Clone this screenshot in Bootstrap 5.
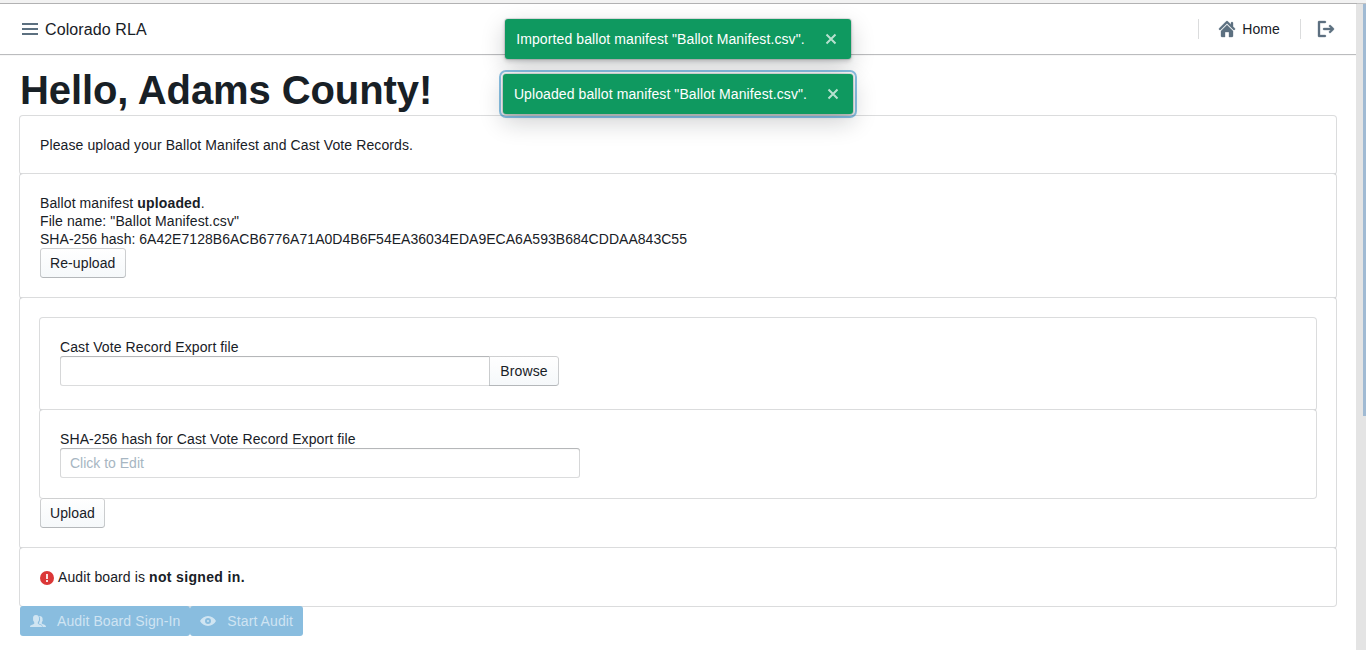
<!DOCTYPE html>
<html lang="en">
<head>
<meta charset="utf-8">
<title>Colorado RLA</title>
<link rel="stylesheet" href="https://cdn.jsdelivr.net/npm/bootstrap@5.3.0/dist/css/bootstrap.min.css">
<style>
  body { font: 14px/18px "Liberation Sans", Arial, sans-serif; color: #182026; background: #fff; letter-spacing: .1px; }
  b { font-weight: 700; letter-spacing: .15px; }
  svg { fill: currentColor; flex: none; }
  .window-edge { height: 4px; background: #f2f2f2; border-bottom: 1px solid #c4c4c4; }
  .top-nav { height: 50px; padding: 0 22px; box-shadow: 0 0 0 1px rgba(16,22,26,.1), 0 1px 1px rgba(16,22,26,.2); }
  .top-nav svg { color: #5c7080; }
  .top-nav .bold-icon { stroke: currentColor; stroke-width: .35; overflow: visible; }
  .app-title { font-size: 16px; line-height: 20px; margin-left: 7px; padding-top: 1px; }
  .nav-split { width: 1px; height: 20px; background: rgba(16,22,26,.15); }
  .nav-home { margin: 0 20px; }
  .nav-home span { margin-left: 7px; }
  .page-body { padding: 16px 20px 0; }
  .greeting { font-size: 40px; line-height: 40px; font-weight: 700; margin: 0 0 6px; letter-spacing: -.1px; }
  .panel { padding: 20px; border-radius: 3px; background: #fff; box-shadow: 0 0 0 1px rgba(16,22,26,.15); position: relative; }
  .panel-file { padding-bottom: 24px; }
  .hash-line { letter-spacing: .033px; }
  .not-signed { letter-spacing: .35px; }
  .btn.action { --bs-btn-border-width: 0; height: 30px; padding: 0 10px; font-size: 14px; line-height: 30px; letter-spacing: .1px; border-radius: 3px; color: #182026;
    background: linear-gradient(#fff, #f5f8fa); background-color: #f5f8fa; box-shadow: inset 0 0 0 1px rgba(16,22,26,.2), inset 0 -1px 0 rgba(16,22,26,.1); position: relative; }
  .btn.action-primary { color: rgba(255,255,255,.6); background: #89bddf; box-shadow: none; opacity: 1; }
  .btn.action-primary svg { margin-right: 11px; }
  .form-control.field { height: 30px; border: 0; border-radius: 3px; padding: 0 10px; font-size: 14px; line-height: 30px; letter-spacing: 0; box-shadow: inset 0 0 0 1px rgba(16,22,26,.15), inset 0 1px 1px rgba(16,22,26,.2); }
  .field::placeholder { color: #a7b6c2 !important; }
  .file-row { width: 499px; }
  .file-row .action { width: 70px; margin-left: -1px; border-radius: 0 3px 3px 0; }
  .hash-field { width: 520px !important; }
  .alert-icon { margin: 3px 4px 0 0; }
  .scroll-track { width: 10px; background: #e4e4e4; }
  .scroll-thumb { width: 3px; height: 412px; background: #a0bad3; }
  .toast-stack { position: absolute; top: 19px; left: 0; width: 1356px; gap: 15px; z-index: 5; }
  .notice { height: 40px; padding: 0 12px 0 11px; border-radius: 3px; background: #0f9960; color: #fff; box-shadow: 0 0 0 1px rgba(16,22,26,.1), 0 2px 4px rgba(16,22,26,.2), 0 8px 24px rgba(16,22,26,.2); }
  .notice svg { margin-left: 18px; opacity: .7; stroke: #fff; stroke-width: 2; }
  .notice-focus { outline: 2px solid rgba(19,124,189,.5); outline-offset: 2px; }
</style>
<script src="https://cdn.jsdelivr.net/npm/bootstrap@5.3.0/dist/js/bootstrap.bundle.min.js"></script>
</head>
<body class="vh-100 overflow-hidden d-flex flex-column">
<div class="window-edge flex-shrink-0"></div>
<div class="d-flex flex-grow-1">
  <div class="flex-grow-1">
    <nav class="top-nav d-flex align-items-center">
      <svg width="16" height="16" viewBox="0 0 16 16"><path d="M0 2h16v2H0zM0 7h16v2H0zM0 12h16v2H0z"/></svg>
      <span class="app-title me-auto">Colorado RLA</span>
      <span class="nav-split"></span>
      <a class="nav-home d-flex align-items-center text-reset text-decoration-none">
        <svg class="bold-icon" width="16" height="16" viewBox="0 0 16 16"><path d="M2 10v5c0 .55.45 1 1 1h3v-5h4v5h3c.55 0 1-.45 1-1v-5L8 4l-6 6zm13.71-2.71L14 5.59V2c0-.55-.45-1-1-1s-1 .45-1 1v1.59L8.71.29C8.53.11 8.28 0 8 0s-.53.11-.71.29l-7 7a1.003 1.003 0 001.42 1.42L8 2.41l6.29 6.29c.18.18.43.3.71.3a1.003 1.003 0 00.71-1.71z"/></svg>
        <span>Home</span>
      </a>
      <span class="nav-split"></span>
      <svg class="bold-icon" style="margin-left:17px" width="16" height="16" viewBox="0 0 16 16"><path d="M7 14H2V2h5c.55 0 1-.45 1-1s-.45-1-1-1H1C.45 0 0 .45 0 1v14c0 .55.45 1 1 1h6c.55 0 1-.45 1-1s-.45-1-1-1zm8.71-6.71l-3-3a1.003 1.003 0 00-1.42 1.42L12.59 7H6c-.55 0-1 .45-1 1s.45 1 1 1h6.59l-1.29 1.29c-.19.18-.3.43-.3.71a1.003 1.003 0 001.71.71l3-3c.18-.18.29-.43.29-.71 0-.28-.11-.53-.29-.71z"/></svg>
    </nav>
    <main class="page-body">
      <h1 class="greeting">Hello, Adams County!</h1>
      <section class="panel">Please upload your Ballot Manifest and Cast Vote Records.</section>
      <section class="panel">
        <div>Ballot manifest <b>uploaded</b>.</div>
        <div>File name: "Ballot Manifest.csv"</div>
        <div class="hash-line">SHA-256 hash: 6A42E7128B6ACB6776A71A0D4B6F54EA36034EDA9ECA6A593B684CDDAA843C55</div>
        <button class="btn action d-block">Re-upload</button>
      </section>
      <section class="panel">
        <div class="panel panel-file">
          <div>Cast Vote Record Export file</div>
          <div class="file-row d-flex">
            <input class="form-control field rounded-end-0" type="text" aria-label="Export file">
            <button class="btn action flex-shrink-0">Browse</button>
          </div>
        </div>
        <div class="panel">
          <div>SHA-256 hash for Cast Vote Record Export file</div>
          <input class="form-control field hash-field d-block" type="text" placeholder="Click to Edit" aria-label="Hash">
        </div>
        <button class="btn action d-block">Upload</button>
      </section>
      <section class="panel d-flex">
        <svg class="alert-icon" width="14" height="14" viewBox="0 0 14 14"><circle cx="7" cy="7" r="7" fill="#db3737"/><path fill="#fff" fill-opacity=".85" d="M6 3h2v5H6zM6 9h2v2H6z"/></svg>
        <span>Audit board is <b class="not-signed">not signed in.</b></span>
      </section>
      <div class="d-flex">
        <button class="btn action action-primary d-flex align-items-center" disabled>
          <svg width="16" height="16" viewBox="0 0 16 16"><path d="M0 14c0-1.200.5-1.700 2-2.200 1.500-.6 2.400-.9 2.400-1.800 0-.5-.5-.7-.8-2C3.200 7.700 2.900 7 3.100 6.400 2.700 3.500 3.800 2 6 2s3.400 1.500 3 4.400c.2.6-.1 1.300-.5 1.600-.3 1.300-.8 1.500-.8 2 0 .9.900 1.200 2.400 1.800 1.500.5 2 1 2 2.200z"/><path d="M9.100 3c2-.3 3.900.7 3.500 3.800.3.500.1 1.100-.3 1.400-.3 1.100-.6 1.300-.6 1.800 0 .8 1.100 1.100 2.300 1.600S16 12.700 16 14h-3.400c0-1.800-1.300-2.500-3.900-3.400 0-1 .8-1.300.9-2.300.6-.8.7-1.500.3-2.200.1-1.300-.1-2.300-.8-3.100z"/></svg>Audit Board Sign-In
        </button>
        <button class="btn action action-primary d-flex align-items-center" disabled>
          <svg width="16" height="16" viewBox="0 0 16 16"><path fill-rule="evenodd" d="M8 3C4.500 3 1.500 5.200 0 8c1.500 2.800 4.500 5 8 5s6.500-2.200 8-5c-1.500-2.800-4.500-5-8-5zm0 2a3 3 0 110 6 3 3 0 010-6zM8 7a1 1 0 100 2 1 1 0 000-2z"/></svg>Start Audit
        </button>
      </div>
    </main>
  </div>
  <div class="scroll-track flex-shrink-0 d-flex justify-content-end"><div class="scroll-thumb"></div></div>
</div>
<div class="toast-stack d-flex flex-column align-items-center">
  <div class="notice d-flex align-items-center">Imported ballot manifest "Ballot Manifest.csv".
    <svg width="16" height="16" viewBox="0 0 16 16"><path d="M3.500 3.500l9 9M12.500 3.500l-9 9"/></svg></div>
  <div class="notice notice-focus d-flex align-items-center">Uploaded ballot manifest "Ballot Manifest.csv".
    <svg width="16" height="16" viewBox="0 0 16 16"><path d="M3.500 3.500l9 9M12.500 3.500l-9 9"/></svg></div>
</div>
</body>
</html>
